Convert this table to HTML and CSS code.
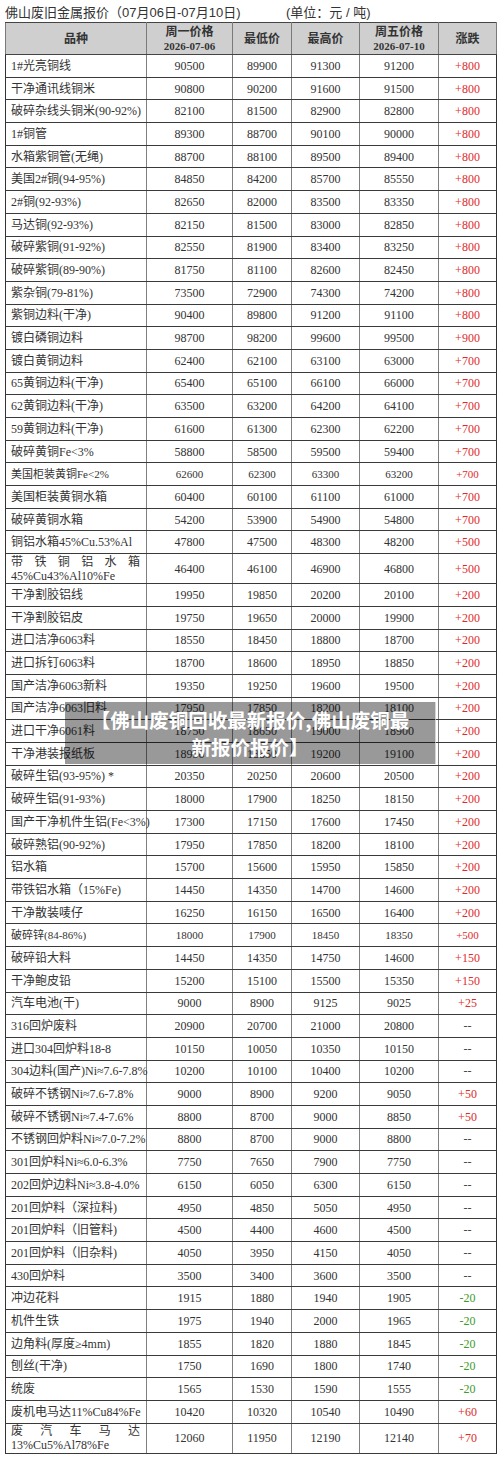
FILE: index.html
```html
<!DOCTYPE html>
<html lang="zh-CN">
<head>
<meta charset="utf-8">
<title>佛山废旧金属报价</title>
<link rel="stylesheet" href="styles.css">
</head>
<body>
<div class="page">
  <div class="title"><span class="title-main">佛山废旧金属报价（07月06日-07月10日)</span><span class="title-unit">(单位：元 / 吨)</span></div>
  <table class="price">
    <colgroup>
      <col class="c1"><col class="c2"><col class="c3"><col class="c4"><col class="c5"><col class="c6">
    </colgroup>
    <thead>
      <tr>
        <th>品种</th>
        <th>周一价格<br><span class="date">2026-07-06</span></th>
        <th>最低价</th>
        <th>最高价</th>
        <th>周五价格<br><span class="date">2026-07-10</span></th>
        <th>涨跌</th>
      </tr>
    </thead>
    <tbody>
      <tr><td>1#光亮铜线</td><td>90500</td><td>89900</td><td>91300</td><td>91200</td><td class="up">+800</td></tr>
      <tr><td>干净通讯线铜米</td><td>90800</td><td>90200</td><td>91600</td><td>91500</td><td class="up">+800</td></tr>
      <tr><td>破碎杂线头铜米(90-92%)</td><td>82100</td><td>81500</td><td>82900</td><td>82800</td><td class="up">+800</td></tr>
      <tr><td>1#铜管</td><td>89300</td><td>88700</td><td>90100</td><td>90000</td><td class="up">+800</td></tr>
      <tr><td>水箱紫铜管(无绳)</td><td>88700</td><td>88100</td><td>89500</td><td>89400</td><td class="up">+800</td></tr>
      <tr><td>美国2#铜(94-95%)</td><td>84850</td><td>84200</td><td>85700</td><td>85550</td><td class="up">+800</td></tr>
      <tr><td>2#铜(92-93%)</td><td>82650</td><td>82000</td><td>83500</td><td>83350</td><td class="up">+800</td></tr>
      <tr><td>马达铜(92-93%)</td><td>82150</td><td>81500</td><td>83000</td><td>82850</td><td class="up">+800</td></tr>
      <tr><td>破碎紫铜(91-92%)</td><td>82550</td><td>81900</td><td>83400</td><td>83250</td><td class="up">+800</td></tr>
      <tr><td>破碎紫铜(89-90%)</td><td>81750</td><td>81100</td><td>82600</td><td>82450</td><td class="up">+800</td></tr>
      <tr><td>紫杂铜(79-81%)</td><td>73500</td><td>72900</td><td>74300</td><td>74200</td><td class="up">+800</td></tr>
      <tr><td>紫铜边料(干净)</td><td>90400</td><td>89800</td><td>91200</td><td>91100</td><td class="up">+800</td></tr>
      <tr><td>镀白磷铜边料</td><td>98700</td><td>98200</td><td>99600</td><td>99500</td><td class="up">+900</td></tr>
      <tr><td>镀白黄铜边料</td><td>62400</td><td>62100</td><td>63100</td><td>63000</td><td class="up">+700</td></tr>
      <tr><td>65黄铜边料(干净)</td><td>65400</td><td>65100</td><td>66100</td><td>66000</td><td class="up">+700</td></tr>
      <tr><td>62黄铜边料(干净)</td><td>63500</td><td>63200</td><td>64200</td><td>64100</td><td class="up">+700</td></tr>
      <tr><td>59黄铜边料(干净)</td><td>61600</td><td>61300</td><td>62300</td><td>62200</td><td class="up">+700</td></tr>
      <tr><td>破碎黄铜Fe&lt;3%</td><td>58800</td><td>58500</td><td>59500</td><td>59400</td><td class="up">+700</td></tr>
      <tr class="small"><td>美国柜装黄铜Fe&lt;2%</td><td>62600</td><td>62300</td><td>63300</td><td>63200</td><td class="up">+700</td></tr>
      <tr><td>美国柜装黄铜水箱</td><td>60400</td><td>60100</td><td>61100</td><td>61000</td><td class="up">+700</td></tr>
      <tr><td>破碎黄铜水箱</td><td>54200</td><td>53900</td><td>54900</td><td>54800</td><td class="up">+700</td></tr>
      <tr><td>铜铝水箱45%Cu.53%Al</td><td>47800</td><td>47500</td><td>48300</td><td>48200</td><td class="up">+500</td></tr>
      <tr class="tall"><td class="just">带铁铜铝水箱 45%Cu43%Al10%Fe</td><td>46400</td><td>46100</td><td>46900</td><td>46800</td><td class="up">+500</td></tr>
      <tr><td>干净割胶铝线</td><td>19950</td><td>19850</td><td>20200</td><td>20100</td><td class="up">+200</td></tr>
      <tr><td>干净割胶铝皮</td><td>19750</td><td>19650</td><td>20000</td><td>19900</td><td class="up">+200</td></tr>
      <tr><td>进口洁净6063料</td><td>18550</td><td>18450</td><td>18800</td><td>18700</td><td class="up">+200</td></tr>
      <tr><td>进口拆钉6063料</td><td>18700</td><td>18600</td><td>18950</td><td>18850</td><td class="up">+200</td></tr>
      <tr><td>国产洁净6063新料</td><td>19350</td><td>19250</td><td>19600</td><td>19500</td><td class="up">+200</td></tr>
      <tr><td>国产洁净6063旧料</td><td>17950</td><td>17850</td><td>18200</td><td>18100</td><td class="up">+200</td></tr>
      <tr><td>进口干净6061料</td><td>18750</td><td>18650</td><td>19000</td><td>18900</td><td class="up">+200</td></tr>
      <tr><td>干净港装报纸板</td><td>18950</td><td>18850</td><td>19200</td><td>19100</td><td class="up">+200</td></tr>
      <tr><td>破碎生铝(93-95%) *</td><td>20350</td><td>20250</td><td>20600</td><td>20500</td><td class="up">+200</td></tr>
      <tr><td>破碎生铝(91-93%)</td><td>18000</td><td>17900</td><td>18250</td><td>18150</td><td class="up">+200</td></tr>
      <tr><td>国产干净机件生铝(Fe&lt;3%)</td><td>17300</td><td>17150</td><td>17600</td><td>17450</td><td class="up">+200</td></tr>
      <tr><td>破碎熟铝(90-92%)</td><td>17950</td><td>17850</td><td>18200</td><td>18100</td><td class="up">+200</td></tr>
      <tr><td>铝水箱</td><td>15700</td><td>15600</td><td>15950</td><td>15850</td><td class="up">+200</td></tr>
      <tr><td>带铁铝水箱（15%Fe)</td><td>14450</td><td>14350</td><td>14700</td><td>14600</td><td class="up">+200</td></tr>
      <tr><td>干净散装唛仔</td><td>16250</td><td>16150</td><td>16500</td><td>16400</td><td class="up">+200</td></tr>
      <tr class="small"><td>破碎锌(84-86%)</td><td>18000</td><td>17900</td><td>18450</td><td>18350</td><td class="up">+500</td></tr>
      <tr><td>破碎铅大料</td><td>14450</td><td>14350</td><td>14750</td><td>14600</td><td class="up">+150</td></tr>
      <tr><td>干净鲍皮铅</td><td>15200</td><td>15100</td><td>15500</td><td>15350</td><td class="up">+150</td></tr>
      <tr><td>汽车电池(干)</td><td>9000</td><td>8900</td><td>9125</td><td>9025</td><td class="up">+25</td></tr>
      <tr><td>316回炉废料</td><td>20900</td><td>20700</td><td>21000</td><td>20800</td><td class="flat">--</td></tr>
      <tr><td>进口304回炉料18-8</td><td>10150</td><td>10050</td><td>10350</td><td>10150</td><td class="flat">--</td></tr>
      <tr><td>304边料(国产)Ni≈7.6-7.8%</td><td>10200</td><td>10100</td><td>10400</td><td>10200</td><td class="flat">--</td></tr>
      <tr><td>破碎不锈钢Ni≈7.6-7.8%</td><td>9000</td><td>8900</td><td>9200</td><td>9050</td><td class="up">+50</td></tr>
      <tr><td>破碎不锈钢Ni≈7.4-7.6%</td><td>8800</td><td>8700</td><td>9000</td><td>8850</td><td class="up">+50</td></tr>
      <tr><td>不锈钢回炉料Ni≈7.0-7.2%</td><td>8800</td><td>8700</td><td>9000</td><td>8800</td><td class="flat">--</td></tr>
      <tr><td>301回炉料Ni≈6.0-6.3%</td><td>7750</td><td>7650</td><td>7900</td><td>7750</td><td class="flat">--</td></tr>
      <tr><td>202回炉边料Ni≈3.8-4.0%</td><td>6150</td><td>6050</td><td>6300</td><td>6150</td><td class="flat">--</td></tr>
      <tr><td>201回炉料（深拉料)</td><td>4950</td><td>4850</td><td>5050</td><td>4950</td><td class="flat">--</td></tr>
      <tr><td>201回炉料（旧管料)</td><td>4500</td><td>4400</td><td>4600</td><td>4500</td><td class="flat">--</td></tr>
      <tr><td>201回炉料（旧杂料)</td><td>4050</td><td>3950</td><td>4150</td><td>4050</td><td class="flat">--</td></tr>
      <tr><td>430回炉料</td><td>3500</td><td>3400</td><td>3600</td><td>3500</td><td class="flat">--</td></tr>
      <tr><td>冲边花料</td><td>1915</td><td>1880</td><td>1940</td><td>1905</td><td class="down">-20</td></tr>
      <tr><td>机件生铁</td><td>1975</td><td>1940</td><td>2000</td><td>1965</td><td class="down">-20</td></tr>
      <tr><td>边角料(厚度≥4mm)</td><td>1855</td><td>1820</td><td>1880</td><td>1845</td><td class="down">-20</td></tr>
      <tr><td>刨丝(干净)</td><td>1750</td><td>1690</td><td>1800</td><td>1740</td><td class="down">-20</td></tr>
      <tr><td>统废</td><td>1565</td><td>1530</td><td>1590</td><td>1555</td><td class="down">-20</td></tr>
      <tr><td>废机电马达11%Cu84%Fe</td><td>10420</td><td>10320</td><td>10540</td><td>10490</td><td class="up">+60</td></tr>
      <tr class="tall"><td class="just">废汽车马达 13%Cu5%Al78%Fe</td><td>12060</td><td>11950</td><td>12190</td><td>12140</td><td class="up">+70</td></tr>
    </tbody>
  </table>
  <div class="overlay">【佛山废铜回收最新报价,佛山废铜最<br>新报价报价】</div>
</div>
</body>
</html>
```

FILE: styles.css
```css
html, body {
  margin: 0;
  padding: 0;
  background: #ffffff;
}

.page {
  position: relative;
  width: 500px;
  padding: 0 0 0 5px;
  box-sizing: border-box;
}

.title {
  height: 22px;
  display: flex;
  align-items: center;
  font-family: "Liberation Sans", "Noto Sans CJK SC", sans-serif;
  font-size: 13px;
  color: #333;
}

.title-main {
  width: 281px;
}

.title-unit {
  color: #333;
}

.price {
  border-collapse: collapse;
  table-layout: fixed;
  width: 491px;
  font-family: "Liberation Serif", "Noto Sans CJK SC", serif;
  font-size: 12px;
  color: #333;
}

.c1 { width: 141px; }
.c2 { width: 86px; }
.c3 { width: 59px; }
.c4 { width: 68px; }
.c5 { width: 79px; }
.c6 { width: 58px; }

.price th {
  background: #cfcfcf;
  height: 31px;
  padding: 0;
  border: 1px solid #444;
  border-left-color: #7a7a7a;
  border-right-color: #7a7a7a;
  font-family: "Liberation Serif", "Noto Sans CJK SC", serif;
  font-weight: bold;
  font-size: 12px;
  line-height: 14px;
  color: #333;
  text-align: center;
  vertical-align: middle;
}

.price th .date {
  font-size: 11px;
}

.price td {
  height: 21.7px;
  padding: 0;
  border: 1px solid #3a3a3a;
  border-left-color: #808080;
  border-right-color: #808080;
  text-align: center;
  vertical-align: middle;
  line-height: 14px;
  white-space: nowrap;
}

.price td:first-child {
  text-align: left;
  padding: 0 6px 0 5px;
  border-left-color: #333;
}

.price td:last-child {
  border-right-color: #333;
}

.price tr.small td {
  font-size: 11px;
}

.price tr.tall td {
  height: 29px;
}

.price td.just {
  white-space: normal;
  text-align: justify;
  text-align-last: left;
  line-height: 14px;
}

.up { color: #e02a2a; }
.down { color: #3d9a2c; }
.flat { color: #444; }

.overlay {
  position: absolute;
  left: 65px;
  top: 702px;
  width: 371px;
  height: 62px;
  box-sizing: border-box;
  padding-top: 4px;
  background: rgba(0, 0, 0, 0.4);
  border-right: 1px solid rgba(255, 255, 255, 0.6);
  color: #ffffff;
  font-family: "Noto Sans CJK SC", sans-serif;
  font-weight: bold;
  font-size: 19.5px;
  line-height: 27px;
  text-align: center;
}
```
